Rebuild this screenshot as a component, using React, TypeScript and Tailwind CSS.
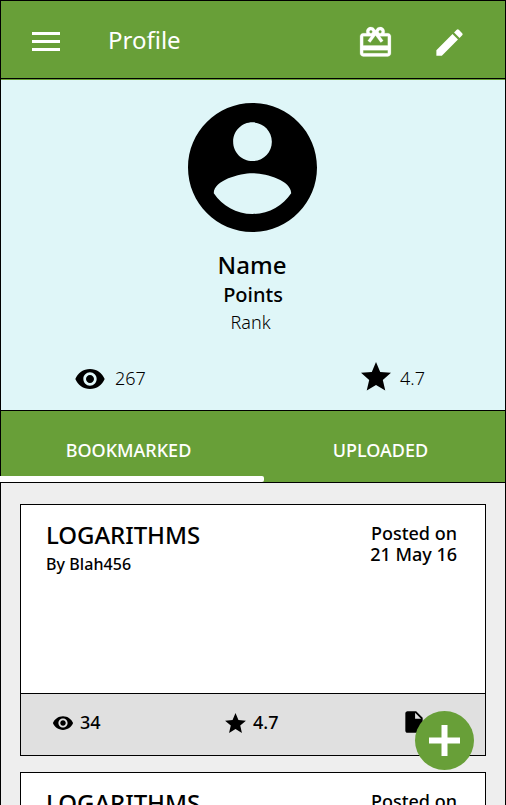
import React from "react";
import { MdEdit, MdInsertDriveFile, MdRemoveRedEye, MdStar } from "react-icons/md";

function GiftCardIcon() {
  return (
    <svg
      viewBox="0 0 24 24"
      className="mt-[23px] ml-[49px] size-[37px] shrink-0 fill-white stroke-white"
      strokeWidth="0.15"
    >
      <path d="M20 6h-2.18c.11-.31.18-.65.18-1 0-1.66-1.34-3-3-3-1.05 0-1.96.54-2.5 1.35l-.5.67-.5-.68C10.96 2.54 10.05 2 9 2 7.34 2 6 3.34 6 5c0 .35.07.69.18 1H4c-1.11 0-1.99.89-1.99 2L2 19c0 1.11.89 2 2 2h16c1.11 0 2-.89 2-2V8c0-1.11-.89-2-2-2zm-5-2c.55 0 1 .45 1 1s-.45 1-1 1-1-.45-1-1 .45-1 1-1zM9 4c.55 0 1 .45 1 1s-.45 1-1 1-1-.45-1-1 .45-1 1-1zm11 15H4v-2h16v2zm0-5H4V8h5.08L7 10.83 8.62 12 11 8.76l1-1.36 1 1.36L15.38 12 17 10.83 14.92 8H20v6z" />
    </svg>
  );
}

function Header() {
  return (
    <header className="flex h-[79px] shrink-0 items-start border-y border-black bg-[#689f38] text-white">
      <button aria-label="Menu" className="mt-[31px] ml-[31px] flex w-7 flex-col gap-[5px]">
        <span className="h-[3px] w-full bg-white" />
        <span className="h-[3px] w-full bg-white" />
        <span className="h-[3px] w-full bg-white" />
      </button>
      <h1 className="mt-[23px] ml-[48px] w-[200px] text-[24px] leading-8">Profile</h1>
      <GiftCardIcon />
      <MdEdit size={35} className="mt-6 ml-[38px] shrink-0" />
    </header>
  );
}

function Avatar() {
  return (
    <svg viewBox="2 2 20 20" className="mt-[23px] ml-[187px] size-[129px]" fill="currentColor">
      <path d="M12 2C6.48 2 2 6.48 2 12s4.48 10 10 10 10-4.48 10-10S17.52 2 12 2zm0 3c1.66 0 3 1.34 3 3s-1.34 3-3 3-3-1.34-3-3 1.34-3 3-3zm0 14.2c-2.5 0-4.71-1.28-6-3.22.03-1.99 4-3.08 6-3.08 1.99 0 5.97 1.09 6 3.08-1.29 1.94-3.5 3.22-6 3.22z" />
    </svg>
  );
}

function Summary() {
  return (
    <section className="h-[331px] shrink-0 border-t border-[#689f38] bg-[#dff6f8] text-black">
      <Avatar />
      <div className="flex w-[502px] flex-col items-center">
        <h2 className="mt-[17px] text-[24px] leading-8 font-medium">Name</h2>
        <p className="pl-0.5 text-[20px] leading-7 font-medium">Points</p>
        <p className="-mt-px pr-[3px] text-[18px] leading-7 font-light">Rank</p>
      </div>
      <div className="mt-[24px] flex h-9 items-start text-[18px] leading-9 font-light">
        <MdRemoveRedEye size={32} className="mt-[3px] ml-[73px]" />
        <span className="ml-[9px] w-[60px]">267</span>
        <MdStar size={36} className="-mt-px ml-[183px]" />
        <span className="ml-[6px]">4.7</span>
      </div>
    </section>
  );
}

function Tabs() {
  return (
    <nav className="h-[73px] shrink-0 border-y border-black bg-[#689f38] text-white">
      <div className="flex h-[65px] pt-[21px] text-[18px] leading-9 font-medium">
        <span className="w-[255px] text-center">BOOKMARKED</span>
        <span className="w-[249px] text-center">UPLOADED</span>
      </div>
      <div className="-ml-px h-1.5 w-[264px] rounded-r-[2px] bg-white" />
    </nav>
  );
}

function Card() {
  return (
    <article className="flex h-[252px] w-[466px] shrink-0 flex-col border border-black bg-white text-black">
      <div className="flex h-[188px] shrink-0 justify-between pr-[28px] pl-[25px]">
        <div className="pt-[14px]">
          <h3 className="text-[24px] leading-8 font-medium tracking-[-0.05px]">LOGARITHMS</h3>
          <p className="mt-px text-[16px] leading-6 font-medium tracking-[0.08px]">By Blah456</p>
        </div>
        <p className="pt-[18px] text-right text-[18px] leading-[21px] font-medium">
          Posted on
          <br />
          21 May 16
        </p>
      </div>
      <div className="flex flex-1 items-start border-t border-black bg-[#e0e0e0] text-[18px] leading-9 font-medium">
        <MdRemoveRedEye size={22} className="mt-[18px] ml-[31px]" />
        <span className="mt-[10px] ml-[6px] w-[60px]">34</span>
        <MdStar size={25} className="mt-[17px] ml-[83px]" />
        <span className="mt-[10px] ml-[5px] w-[60px]">4.7</span>
        <MdInsertDriveFile size={26} className="mt-[15px] ml-[88px]" />
      </div>
    </article>
  );
}

export default function App() {
  return (
    <div className="h-[805px] w-[506px] overflow-hidden font-['Noto_Sans',sans-serif]">
      <div className="flex h-[805px] flex-col border-x border-black bg-[#eeeeee]">
        <Header />
        <Summary />
        <Tabs />
        <main className="relative flex flex-col gap-4 pt-[21px] pl-[19px]">
          <Card />
          <Card />
          <button aria-label="Add" className="absolute top-[228px] left-[414px] flex size-[59px] items-center justify-center rounded-full bg-[#689f38]">
            <svg viewBox="0 0 31 31" className="size-[31px]" fill="white">
              <path d="M12.5 0h6v12.5H31v6H18.500V31h-6V18.500H0v-6h12.500z" />
            </svg>
          </button>
        </main>
      </div>
    </div>
  );
}
